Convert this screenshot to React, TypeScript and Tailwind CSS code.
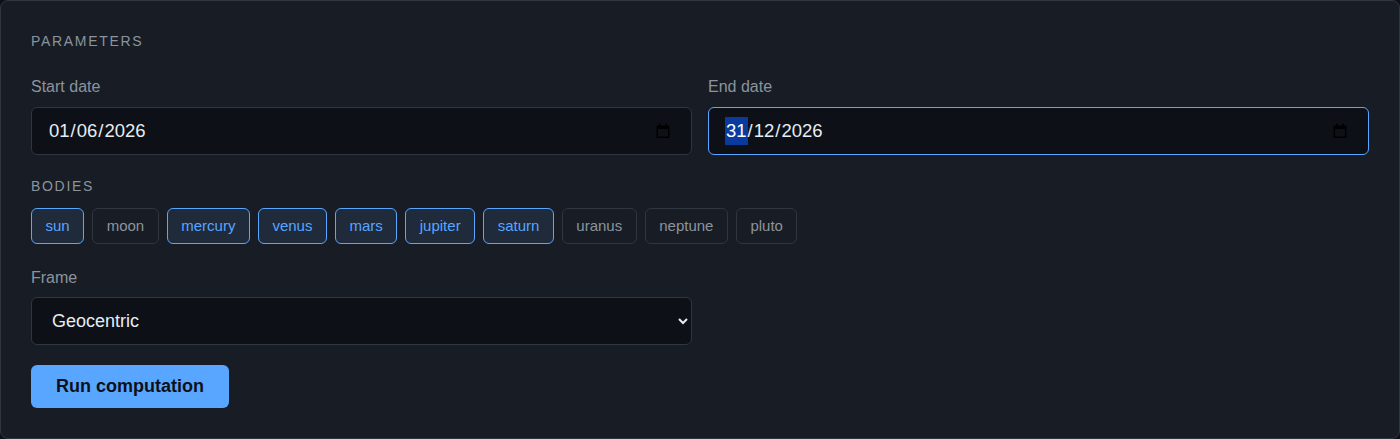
import React, { useState } from 'react';

const BODIES = ['sun', 'moon', 'mercury', 'venus', 'mars', 'jupiter', 'saturn', 'uranus', 'neptune', 'pluto'];

// small calendar glyph like the native picker indicator
const CalendarIcon: React.FC = () => (
  <svg width="14" height="16" viewBox="0 0 14 16" className="shrink-0">
    <rect x="3" y="0.5" width="1.6" height="3" fill="#000" />
    <rect x="9.4" y="0.5" width="1.6" height="3" fill="#000" />
    <path d="M1.5 2.5h11a1 1 0 0 1 1 1v10.5a1 1 0 0 1-1 1h-11a1 1 0 0 1-1-1V3.5a1 1 0 0 1 1-1z M2 6v7.5h10V6z" fill="#000" fillRule="evenodd" />
  </svg>
);

const DateField: React.FC<{ day: string; month: string; year: string; focused?: boolean }> = ({ day, month, year, focused }) => (
  <div
    className={`h-12 flex items-center justify-between rounded-md border bg-[#0d1117] pl-[16px] pr-[21px] text-[18.5px] text-[#e6edf3] ${
      focused ? 'border-[#58a6ff]' : 'border-[#30363d]'
    }`}
  >
    <div className="flex items-center">
      <span className={`px-px ${focused ? 'bg-[#0b3a9e] text-white' : ''}`}>{day}</span>
      <span>/</span>
      <span className="px-px">{month}</span>
      <span>/</span>
      <span className="px-px">{year}</span>
    </div>
    <CalendarIcon />
  </div>
);

const App: React.FC = () => {
  const [selected, setSelected] = useState<string[]>(['sun', 'mercury', 'venus', 'mars', 'jupiter', 'saturn']);
  const [frame, setFrame] = useState('geocentric');

  const toggle = (b: string) =>
    setSelected((s) => (s.includes(b) ? s.filter((x) => x !== b) : [...s, b]));

  return (
    <div className="min-h-screen bg-[#0d1117]" style={{ fontFamily: '"Liberation Sans", Arial, sans-serif' }}>
      <section className="h-[439px] rounded-lg border border-[#30363d] bg-[#181c24] px-[30px] pt-[30px]">
        <h2 className="text-[14px] leading-5 uppercase tracking-[0.12em] text-[#8b949e]">Parameters</h2>

        <div className="grid grid-cols-2 gap-4 mt-[26px]">
          <div>
            <label className="block text-[16px] leading-5 text-[#8b949e] mb-[10px]">Start date</label>
            <DateField day="01" month="06" year="2026" />
          </div>
          <div>
            <label className="block text-[16px] leading-5 text-[#8b949e] mb-[10px]">End date</label>
            <DateField day="31" month="12" year="2026" focused />
          </div>
        </div>

        <h3 className="mt-[21px] text-[14px] leading-5 uppercase tracking-[0.12em] text-[#8b949e]">Bodies</h3>
        <div className="mt-3 flex flex-wrap gap-2">
          {BODIES.map((b) => {
            const on = selected.includes(b);
            return (
              <button
                key={b}
                onClick={() => toggle(b)}
                className={`h-9 rounded-md border px-[13.5px] text-[15px] leading-5 ${
                  on ? 'border-[#58a6ff] bg-[#1f2a3b] text-[#58a6ff]' : 'border-[#30363d] bg-transparent text-[#8b949e]'
                }`}
              >
                {b}
              </button>
            );
          })}
        </div>

        <div className="grid grid-cols-2 gap-4 mt-6">
          <div>
            <label className="block text-[16px] leading-5 text-[#8b949e] mb-[9px]">Frame</label>
            <select
              value={frame}
              onChange={(e) => setFrame(e.target.value)}
              className="w-full h-12 rounded-md border border-[#30363d] bg-[#0d1117] px-4 text-[18px] text-[#e6edf3] outline-none"
            >
              <option value="geocentric">Geocentric</option>
              <option value="heliocentric">Heliocentric</option>
              <option value="barycentric">Barycentric</option>
            </select>
          </div>
        </div>

        <button className="mt-5 h-[43px] rounded-md bg-[#58a6ff] px-[25px] text-[18px] font-bold text-[#0d1117]">
          Run computation
        </button>
      </section>
    </div>
  );
};

export default App;
